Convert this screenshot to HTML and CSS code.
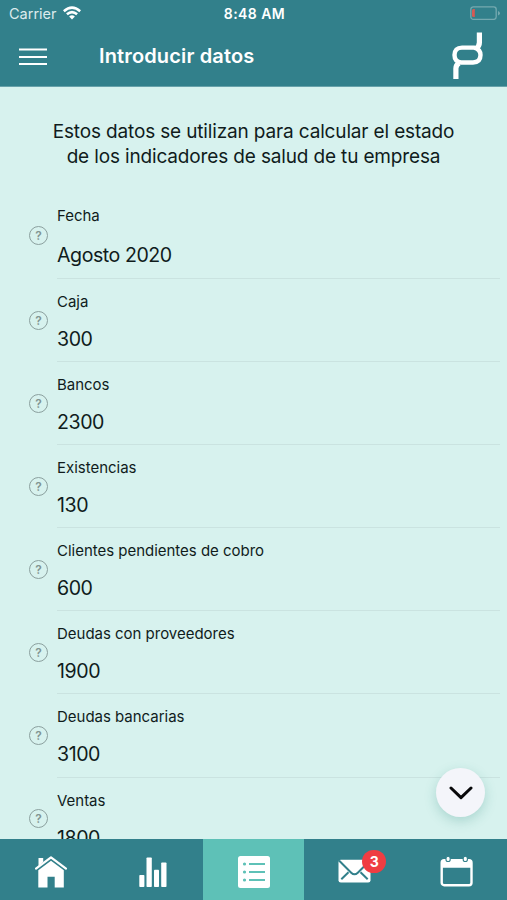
FILE: index.html
```html
<!DOCTYPE html>
<html lang="es">
<head>
<meta charset="utf-8">
<meta name="viewport" content="width=device-width, initial-scale=1">
<title>Introducir datos</title>
<link rel="stylesheet" href="styles.css">
</head>
<body>
<div class="app">
  <header class="header">
    <div class="status">
      <div class="status-left"><span class="carrier">Carrier</span>
        <svg class="wifi" viewBox="0 0 18 14" width="18" height="14"><g fill="none" stroke="#fff" stroke-width="2.6"><path d="M.8 5.2Q9-1.9 17.2 5.2"/><path d="M3.9 8.3Q9 4 14.1 8.3"/></g><path d="M6.1 10.4Q9 8 11.9 10.4L9 13.6Z" fill="#fff"/></svg>
      </div>
      <span class="clock">8:48 AM</span>
      <svg class="battery" viewBox="0 0 30 14" width="30" height="14"><rect x=".8" y=".8" width="25.4" height="12.6" rx="2.6" fill="none" stroke="#75a9b0" stroke-width="1.3"/><path d="M28 5v4.4q2-.7 2-2.2T28 5" fill="#75a9b0"/><path d="M4.8 3v8H3.5Q2 11 2 9.5v-5Q2 3 3.5 3Z" fill="#d75a54"/></svg>
    </div>
    <div class="toolbar">
      <svg class="menu" viewBox="0 0 28 18" width="28" height="18"><path d="M0 1.5h28M0 9h28M0 16h28" stroke="#fff" stroke-width="2.2"/></svg>
      <h1 class="title">Introducir datos</h1>
      <svg class="logo" viewBox="0 0 32 48" width="32" height="48"><g fill="none" stroke="#fff"><path d="M28.4 .5v10q0 3.5-3.2 6M4.9 47V36.5q0-3.5 3.2-5.5" stroke-width="5.2"/><path d="M11 15.6h12q6.5 1.5 6.5 7.5 0 7.4-7.5 7.4h-12q-6.5-.8-6.5-7.4 0-7.5 7.5-7.5Z" stroke-width="4.4"/></g></svg>
    </div>
  </header>
  <main class="content">
    <p class="intro">Estos datos se utilizan para calcular el estado<br>de los indicadores de salud de tu empresa</p>
    <div class="row row-first"><span class="help">?</span><div class="field"><span class="label">Fecha</span><span class="value">Agosto 2020</span></div></div>
    <div class="row"><span class="help">?</span><div class="field"><span class="label">Caja</span><span class="value">300</span></div></div>
    <div class="row"><span class="help">?</span><div class="field"><span class="label">Bancos</span><span class="value">2300</span></div></div>
    <div class="row"><span class="help">?</span><div class="field"><span class="label">Existencias</span><span class="value">130</span></div></div>
    <div class="row"><span class="help">?</span><div class="field"><span class="label">Clientes pendientes de cobro</span><span class="value">600</span></div></div>
    <div class="row"><span class="help">?</span><div class="field"><span class="label">Deudas con proveedores</span><span class="value">1900</span></div></div>
    <div class="row"><span class="help">?</span><div class="field"><span class="label">Deudas bancarias</span><span class="value">3100</span></div></div>
    <div class="row"><span class="help">?</span><div class="field"><span class="label">Ventas</span><span class="value">1800</span></div></div>
    <div class="fab"><svg viewBox="0 0 24 14" width="24" height="14"><path d="M2 2l10 9.7L22 2" fill="none" stroke="#08080a" stroke-width="3" stroke-linecap="round" stroke-linejoin="round"/></svg></div>
  </main>
  <nav class="tabs">
    <div class="tab"><svg viewBox="0 0 32 32" width="32" height="32"><path d="M3.5 2h4.7v4L3.5 10Z" fill="#fff"/><path d="M1 12.7 16 1.3l15 11.4" fill="none" stroke="#fff" stroke-width="2.2" stroke-linecap="round" stroke-linejoin="round"/><path d="M3.3 14.2 16 4.7l12.8 9.5v17.2h-9.1V20.7h-7.2v10.7H3.3Z" fill="#fff"/></svg></div>
    <div class="tab"><svg class="bars" viewBox="0 0 30 32" width="30" height="32"><g fill="#fff"><rect x="1.3" y="19" width="5.1" height="12" rx=".8"/><rect x="8.5" y="1.5" width="5.3" height="29.5" rx=".8"/><rect x="16" y="13.7" width="5" height="17.3" rx=".8"/><rect x="23.2" y="6.5" width="5.3" height="24.5" rx=".8"/></g></svg></div>
    <div class="tab active"><svg class="list" viewBox="0 0 32 32" width="32" height="32"><rect width="32" height="32" rx="2.5" fill="#fff"/><g stroke="#5ec1b7" stroke-width="2"><path d="M11 8h16M11 16h16M11 24h16"/><path d="M6.5 8h.01M6.5 16h.01M6.5 24h.01" stroke-width="3.2" stroke-linecap="round"/></g></svg></div>
    <div class="tab"><div class="mail"><svg viewBox="0 0 33 24" width="33" height="24"><rect x=".5" y=".8" width="32" height="22.7" rx="2.3" fill="#fff"/><path d="m1 1.5 12.2 12.2q3.3 3.2 6.6 0L32 1.5M3.3 20.3l7.2-7M29.7 20.3l-7.2-7" fill="none" stroke="#32808b" stroke-width="2"/></svg><span class="badge">3</span></div></div>
    <div class="tab"><svg class="calendar" viewBox="0 0 33 31" width="33" height="31"><rect x="1.7" y="4.2" width="29.8" height="25" rx="2.5" fill="none" stroke="#fff" stroke-width="2.4"/><path d="M1.7 6q0-2.5 2.5-2.5H29q2.5 0 2.5 2.5v5.8H1.7Z" fill="#fff"/><g fill="#fff" stroke="#32808b" stroke-width="1.1"><rect x="6" y=".3" width="4.2" height="5.2" rx="2.1"/><rect x="23.2" y=".3" width="4.2" height="5.2" rx="2.1"/></g></svg></div>
  </nav>
</div>
</body>
</html>
```
FILE: styles.css
```css
* { box-sizing: border-box; }
body { margin: 0; font-family: Inter, "Liberation Sans", sans-serif; color: #101c1c; }
.app { width: 507px; height: 900px; display: flex; flex-direction: column; overflow: hidden; background: #d7f2ee; }
.header { height: 87px; flex: none; background: #32808b; color: #fff; border-bottom: 1px solid #67a2aa; }
.status { height: 27px; display: grid; grid-template-columns: 1fr auto 1fr; align-items: center; padding: 0 7px 0 9px; }
.status-left { display: flex; align-items: center; gap: 6px; }
.wifi { margin-top: -2px; }
.battery { justify-self: end; margin-top: -1px; }
.carrier { font-size: 14.5px; line-height: 20px; color: #dcebed; }
.clock { font-size: 14px; font-weight: 600; line-height: 20px; letter-spacing: .45px; }
.toolbar { height: 58px; display: flex; align-items: center; padding: 0 24px 0 19px; }
.menu { margin-top: 1px; }
.title { margin: 0 0 0 52px; font-size: 20px; line-height: 26px; font-weight: 600; letter-spacing: .14px; flex: 1; }
.logo { display: block; }
.content { flex: 1; min-height: 0; overflow: hidden; position: relative; }
.intro { margin: 33px 0 24px; text-align: center; font-size: 19px; line-height: 24.5px; letter-spacing: -.15px; white-space: nowrap; }
.row { height: 83.1px; display: flex; align-items: center; padding: 0 7px 0 29px; }
.row-first { height: 86px; }
.help { flex: none; width: 19px; height: 19px; margin-bottom: 1px; border: 1.5px solid #8ba09e; border-radius: 50%; font-size: 12px; line-height: 17px; font-weight: 600; color: #819492; text-align: center; }
.field { flex: 1; align-self: stretch; margin-left: 9px; border-bottom: 1px solid #cae3e0; display: flex; flex-direction: column; padding-top: 13px; }
.label { font-size: 15px; line-height: 20px; letter-spacing: -.02px; }
.value { font-size: 19.6px; line-height: 26px; margin-top: 14px; letter-spacing: -.45px; }
.row-first .value { margin-top: 16px; }
.fab { position: absolute; right: 22px; bottom: 22px; width: 49px; height: 49px; border-radius: 50%; background: #f4f5fa; display: flex; align-items: center; justify-content: center; box-shadow: 0 4px 12px rgba(40, 130, 120, .25); }
.tabs { height: 61px; flex: none; display: grid; grid-template-columns: repeat(5, 1fr); background: #32808b; }
.tab { display: flex; align-items: center; justify-content: center; padding-top: 4px; }
.active { background: #5ec1b7; }
.list, .bars { margin-left: 1px; }
.mail { position: relative; display: flex; margin-top: -1px; }
.badge { position: absolute; left: 24px; top: -9px; width: 24px; height: 23px; border-radius: 12px; background: #ef3d42; color: #fff; font-size: 14px; line-height: 23px; font-weight: 700; text-align: center; }
```
